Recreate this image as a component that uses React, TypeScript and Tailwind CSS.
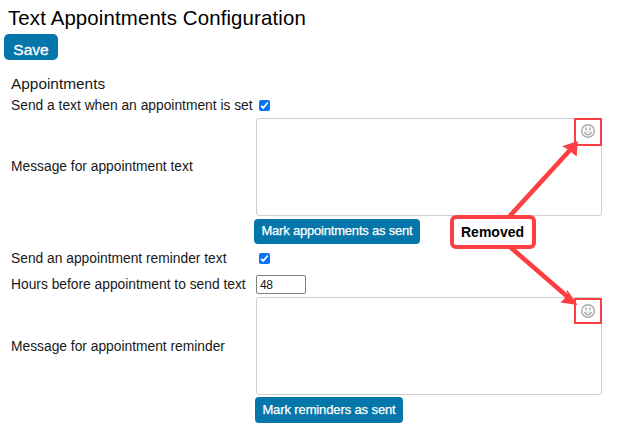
import { ReactNode, useState } from 'react';

const RED = '#fd3f42';

function Smiley() {
  return (
    <svg viewBox="0 0 16 16" className="h-4 w-4" fill="none" stroke="#a8a8a8">
      <circle cx="8" cy="8" r="6.3" strokeWidth="1.4" />
      <path d="M6 4.4v3M10 4.4v3" strokeWidth="1.5" />
      <path d="M4.6 9.3c.6 1.8 1.8 2.5 3.4 2.5s2.8-.7 3.4-2.5" strokeWidth="1.3" />
      <path d="M4.3 9.2h7.4" strokeWidth="0.6" />
    </svg>
  );
}

function Checkbox({ label }: { label: string }) {
  const [checked, setChecked] = useState(true);

  return (
    <button
      role="checkbox"
      aria-checked={checked}
      aria-label={label}
      onClick={() => setChecked(!checked)}
      className="ml-[3px] h-[11px] w-[11px] rounded-[2px] bg-[#0873f8]"
    >
      {checked && (
        <svg viewBox="0 0 11 11" className="h-[11px] w-[11px]" fill="none" stroke="white" strokeWidth="1.7">
          <path d="M2.2 5.8l2.1 2.1 4.5-5.4" />
        </svg>
      )}
    </button>
  );
}

function Label({ children }: { children: ReactNode }) {
  return <div className="text-[13.8px] leading-4 whitespace-nowrap text-[#181818]">{children}</div>;
}

function MessageBox({ label, markClass }: { label: string; markClass: string }) {
  return (
    <div className="relative h-[98px] w-[346px]">
      <textarea
        aria-label={label}
        className="block h-full w-full resize-none rounded-[3px] border border-[#cfcfcf] bg-white p-2 pr-8 text-sm outline-none"
      />
      <div className={`absolute right-0 flex w-7 items-center justify-center border-2 border-[#fd3f42] ${markClass}`}>
        <Smiley />
      </div>
    </div>
  );
}

export default function App() {
  return (
    <div className="relative h-[433px] w-[624px] overflow-hidden bg-white font-['Liberation_Sans',Arial,sans-serif] text-black">
      <header className="h-[74px] pt-[6px]">
        <h1 className="ml-2 text-[20.4px] leading-6 tracking-[0.14px] whitespace-nowrap">Text Appointments Configuration</h1>
        <button className="mt-1 ml-1 flex h-[26px] w-[54px] items-center justify-center rounded-[5px] bg-[#0576a9] pt-[5px] text-[15.5px] leading-5 text-white [-webkit-text-stroke:0.3px_white]">
          Save
        </button>
      </header>

      <main className="pl-[11px]">
        <h2 className="h-[21px] text-[15.4px] leading-5 text-[#181818]">Appointments</h2>

        <div className="grid grid-cols-[245px_346px] grid-rows-[23px_98px_30px_24px_27px_98px_30px] items-center">
          <div className="pb-px">
            <Label>Send a text when an appointment is set</Label>
          </div>
          <div className="flex items-center pb-[2px]">
            <Checkbox label="Send a text when an appointment is set" />
          </div>

          <Label>Message for appointment text</Label>
          <MessageBox label="Message for appointment text" markClass="top-0 h-7 pb-[2px]" />

          <button className="col-start-2 -ml-[2px] flex h-[25px] w-[166px] items-center justify-center rounded-[4px] bg-[#0576a9] text-[13px] tracking-[-0.2px] whitespace-nowrap text-white [-webkit-text-stroke:0.25px_white]">
            Mark appointments as sent
          </button>

          <div className="pt-[2px]">
            <Label>Send an appointment reminder text</Label>
          </div>
          <div className="flex items-center">
            <Checkbox label="Send an appointment reminder text" />
          </div>

          <div className="pt-[3px]">
            <Label>Hours before appointment to send text</Label>
          </div>
          <input
            aria-label="Hours before appointment"
            defaultValue="48"
            className="mt-[2px] h-[19px] w-[50px] rounded-[2px] border border-[#808080] px-[3px] text-[12px] leading-4 tracking-[-0.5px] text-[#181818] outline-none"
          />

          <div className="pt-[2px]">
            <Label>Message for appointment reminder</Label>
          </div>
          <MessageBox label="Message for appointment reminder" markClass="top-px h-[26px]" />

          <button className="col-start-2 -ml-px flex h-[26px] w-[148px] items-center justify-center rounded-[4px] bg-[#0576a9] text-[13px] tracking-[-0.12px] whitespace-nowrap text-white [-webkit-text-stroke:0.25px_white]">
            Mark reminders as sent
          </button>
        </div>
      </main>

      <svg className="pointer-events-none absolute inset-0" width="624" height="433" fill={RED} stroke={RED}>
        <path d="M508 218L571 149" strokeWidth="4.6" />
        <path d="M577 142L576 155L572 152L567 148L564 146.5Z" strokeWidth="1.5" />
        <path d="M509 246L569 298" strokeWidth="4.6" />
        <path d="M576 304L562 302L565 299L569 294L567 291Z" strokeWidth="1.5" />
      </svg>
      <div className="absolute top-[215px] left-[450px] flex h-[34px] w-[86px] items-center justify-center rounded-[6px] border-[4px] border-[#fd3f42] bg-white pr-px text-[14px] font-bold">
        Removed
      </div>
    </div>
  );
}
